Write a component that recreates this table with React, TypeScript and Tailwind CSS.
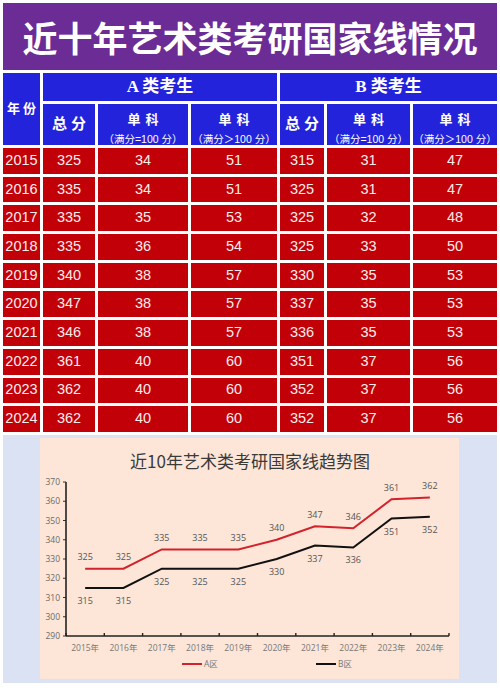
import React from "react";

const rows = [
  ["2015", "325", "34", "51", "315", "31", "47"],
  ["2016", "335", "34", "51", "325", "31", "47"],
  ["2017", "335", "35", "53", "325", "32", "48"],
  ["2018", "335", "36", "54", "325", "33", "50"],
  ["2019", "340", "38", "57", "330", "35", "53"],
  ["2020", "347", "38", "57", "337", "35", "53"],
  ["2021", "346", "38", "57", "336", "35", "53"],
  ["2022", "361", "40", "60", "351", "37", "56"],
  ["2023", "362", "40", "60", "352", "37", "56"],
  ["2024", "362", "40", "60", "352", "37", "56"],
];

const A = [325, 325, 335, 335, 335, 340, 347, 346, 361, 362];
const B = [315, 315, 325, 325, 325, 330, 337, 336, 351, 352];
const years = ["2015", "2016", "2017", "2018", "2019", "2020", "2021", "2022", "2023", "2024"];

const AX0 = 26;
const AX1 = 409;
const Y370 = 44;
const Y290 = 198;
const cw = (AX1 - AX0) / 10;
const cx = (i: number) => AX0 + cw * (i + 0.5);
const vy = (v: number) => Y370 + ((370 - v) * (Y290 - Y370)) / 80;

const small = "font-['Open_Sans','Noto_Sans_CJK_SC',sans-serif]";

function Chart() {
  const ticks = [370, 360, 350, 340, 330, 320, 310, 300, 290];
  const ptsA = A.map((v, i) => `${cx(i)},${vy(v)}`).join(" ");
  const ptsB = B.map((v, i) => `${cx(i)},${vy(v)}`).join(" ");
  return (
    <svg width="419" height="241" viewBox="0 0 419 241" className="block">
      <text
        x="210"
        y="30"
        textAnchor="middle"
        fontSize="17"
        fill="#3a3a3a"
        className="font-['Noto_Sans_CJK_SC',sans-serif]"
      >
        近10年艺术类考研国家线趋势图
      </text>
      {ticks.map((t) => (
        <g key={t}>
          <line x1={AX0 - 3} x2={AX0} y1={vy(t)} y2={vy(t)} stroke="#333" strokeWidth="1" />
          <text x={AX0 - 6} y={vy(t) + 3} textAnchor="end" fontSize="8.5" fill="#6b6b6b" className={small}>
            {t}
          </text>
        </g>
      ))}
      <line x1={AX0} x2={AX0} y1={Y370} y2={Y290} stroke="#222" strokeWidth="1.6" />
      <line x1={AX0} x2={AX1} y1={Y290} y2={Y290} stroke="#222" strokeWidth="1.6" />
      {Array.from({ length: 11 }).map((_, i) => (
        <line
          key={i}
          x1={AX0 + cw * i}
          x2={AX0 + cw * i}
          y1={Y290 - 3}
          y2={Y290}
          stroke="#222"
          strokeWidth="1.4"
        />
      ))}
      {years.map((y, i) => (
        <text key={y} x={cx(i)} y={Y290 + 15} textAnchor="middle" fontSize="8.5" fill="#777" className={small}>
          {y}年
        </text>
      ))}
      <polyline points={ptsA} fill="none" stroke="#d2222d" strokeWidth="2" />
      <polyline points={ptsB} fill="none" stroke="#111" strokeWidth="2" />
      {A.map((v, i) => (
        <text key={"a" + i} x={cx(i)} y={vy(v) - 8.5} textAnchor="middle" fontSize="9" fill="#555" className={small}>
          {v}
        </text>
      ))}
      {B.map((v, i) => (
        <text key={"b" + i} x={cx(i)} y={vy(v) + 16} textAnchor="middle" fontSize="9" fill="#555" className={small}>
          {v}
        </text>
      ))}
      <line x1="142" x2="162" y1="226" y2="226" stroke="#d2222d" strokeWidth="2" />
      <text x="164" y="229" fontSize="8.5" fill="#777" className={small}>
        A区
      </text>
      <line x1="276" x2="296" y1="226" y2="226" stroke="#111" strokeWidth="2" />
      <text x="298" y="229" fontSize="8.5" fill="#777" className={small}>
        B区
      </text>
    </svg>
  );
}

function SubHead({ note }: { note: string }) {
  return (
    <div className="bg-[#2323dc] flex flex-col items-center justify-start text-white pt-[9px]">
      <div className="text-[13px] font-bold tracking-[5px] leading-none pl-[5px]">单科</div>
      <div className="text-[10.5px] leading-none mt-[8px] font-['Liberation_Sans','Noto_Sans_CJK_SC',sans-serif]">
        {note}
      </div>
    </div>
  );
}

function TotalHead() {
  return (
    <div className="bg-[#2323dc] flex items-center justify-center text-white text-[15px] font-bold tracking-[4px] pl-[4px]">
      总分
    </div>
  );
}

export default function App() {
  return (
    <div className="w-[500px] h-[699px] bg-white p-[3px] flex flex-col font-['Liberation_Serif','Noto_Sans_CJK_SC',serif]">
      <div className="h-[67px] bg-[#6b2c96] flex items-center justify-center">
        <span className="text-white text-[35px] font-bold leading-none font-['Noto_Sans_CJK_SC',sans-serif]">
          近十年艺术类考研国家线情况
        </span>
      </div>
      <div className="mt-[3px] grid gap-[3px] grid-cols-[37px_52px_90px_86px_44px_83px_84px] grid-rows-[28px_41px_repeat(10,25.7px)]">
        <div className="bg-[#2323dc] row-span-2 flex items-center justify-center text-white text-[13px] font-bold tracking-[3px] pl-[3px]">
          年份
        </div>
        <div className="bg-[#2323dc] col-span-3 flex items-center justify-center text-white text-[17px] font-bold">
          A 类考生
        </div>
        <div className="bg-[#2323dc] col-span-3 flex items-center justify-center text-white text-[17px] font-bold">
          B 类考生
        </div>
        <TotalHead />
        <SubHead note="（满分=100 分）" />
        <SubHead note="（满分＞100 分）" />
        <TotalHead />
        <SubHead note="（满分=100 分）" />
        <SubHead note="（满分＞100 分）" />
        {rows.map((r) =>
          r.map((c, j) => (
            <div
              key={r[0] + "-" + j}
              className="bg-[#c10007] flex items-center justify-center text-[#fbecec] text-[14.5px] font-['Liberation_Sans',Arial,sans-serif]"
            >
              {c}
            </div>
          ))
        )}
      </div>
      <div className="mt-[3px] bg-[#dbe2f3] pl-[37px] pr-[38px] pt-[3px] pb-[4px]">
        <div className="h-[241px] bg-[#fde6d7]">
          <Chart />
        </div>
      </div>
    </div>
  );
}
